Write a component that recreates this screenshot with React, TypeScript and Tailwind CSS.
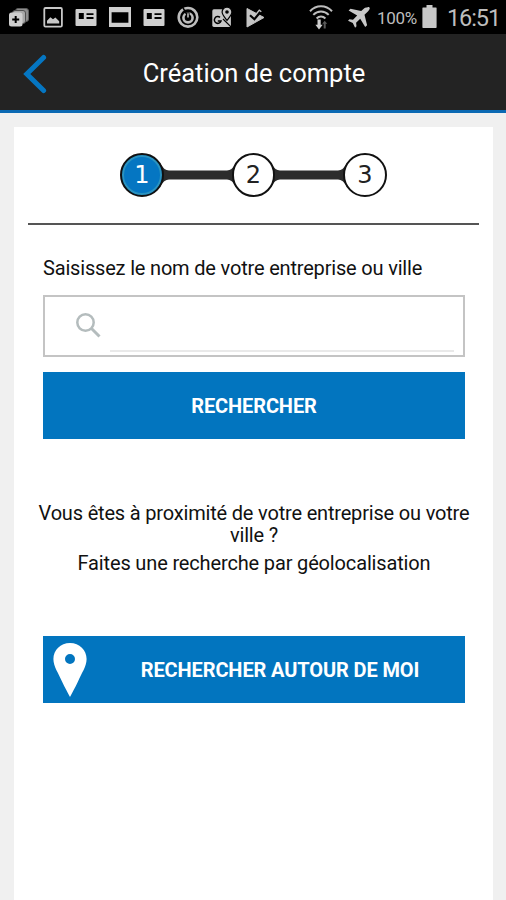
import { useState, type ReactNode } from "react";

interface StatusIconProps {
  children: ReactNode;
}

const StatusIcon = ({ children }: StatusIconProps) => {
  return (
    <span className="flex w-[33.8px] shrink-0 justify-center">
      <svg width="22" height="22" viewBox="0 0 22 22" fill="none">
        {children}
      </svg>
    </span>
  );
};

const ContactCardIcon = () => {
  return (
    <StatusIcon>
      <rect x="0.5" y="3" width="21" height="17" rx="1" fill="#cfcfcf" />
      <rect x="3.8" y="7" width="5" height="6" fill="#000" />
      <path d="M11.5 8.2h7M11.5 12h7" stroke="#000" strokeWidth="1.8" />
    </StatusIcon>
  );
};

const StatusBar = () => {
  return (
    <div className="flex h-[34px] items-center bg-black pl-[2px] text-[#bdbdbd]">
      <StatusIcon>
        <rect x="7.5" y="2.5" width="13" height="13" rx="2.5" fill="#8f8f8f" stroke="#5c5c5c" />
        <rect x="4.5" y="4.5" width="13" height="13" rx="2.5" fill="#a8a8a8" stroke="#505050" />
        <rect x="1" y="6.5" width="13.5" height="14" rx="2.5" fill="#cfcfcf" />
        <path d="M7.7 10v7M4.2 13.5h7" stroke="#000" strokeWidth="2" />
      </StatusIcon>

      <StatusIcon>
        <rect x="2.3" y="2" width="17.6" height="18.6" rx="1.2" stroke="#c8c8c8" strokeWidth="1.8" />
        <path d="M5 17.5v-2.8l3.4-3.5 2.6 2 2.4-1.6 3.8 3.6v2.3z" fill="#c8c8c8" />
      </StatusIcon>

      <ContactCardIcon />

      <StatusIcon>
        <path
          fillRule="evenodd"
          d="M0 1h22v20H0zM2.6 6.2h16.8v10.6H2.6z"
          fill="#cfcfcf"
        />
      </StatusIcon>

      <ContactCardIcon />

      <StatusIcon>
        <circle cx="11" cy="11.3" r="9.3" stroke="#bdbdbd" strokeWidth="2.6" />
        <circle cx="11" cy="11.8" r="4.6" stroke="#bdbdbd" strokeWidth="2.6" />
        <path d="M5.6 1.2 11 10.5" stroke="#000" strokeWidth="1.5" />
        <path d="M11 6.3v5" stroke="#000" strokeWidth="3.2" />
        <path d="M11 7.2v4.4" stroke="#bdbdbd" strokeWidth="1.6" />
      </StatusIcon>

      <StatusIcon>
        <rect x="1.3" y="3.3" width="18.6" height="17.6" rx="1.6" fill="#c8c8c8" />
        <path d="m12 13 8 7.900" stroke="#000" strokeWidth="1.2" />
        <path
          d="M9 11.4a3.400 3.400 0 1 0 1 3.600H6.800"
          stroke="#000"
          strokeWidth="1.5"
        />
        <path
          d="M16 14.5c-3-3.9-4.9-6-4.9-8.5a4.9 4.9 0 0 1 9.8 0c0 2.5-1.9 4.6-4.9 8.5z"
          fill="#c8c8c8"
          stroke="#000"
          strokeWidth="1.2"
        />
        <circle cx="16" cy="6" r="1.8" fill="#000" />
      </StatusIcon>

      <StatusIcon>
        <path d="M3 2.5 20 11.5 3 21z" fill="#c4c4c4" stroke="#c4c4c4" strokeLinejoin="round" />
        <path d="m6 9.200 4.400 4L16 6.500" stroke="#000" strokeWidth="2.200" />
        <path d="m12.500 7.600 2.800-3.400 2 1.600" stroke="#c4c4c4" strokeWidth="1.400" />
      </StatusIcon>

      <div className="ml-[36.6px] flex w-6 justify-center">
        <svg width="24" height="28" viewBox="0 0 24 28" fill="none">
          <g stroke="#bdbdbd" strokeWidth="2">
            <path d="M1 8.2C7.2 1.7 16.8 1.7 23 8.2" />
            <path d="M4.3 11.9c4.4-4.5 11-4.5 15.4 0" />
            <path d="M7.6 15.5c2.5-2.6 6.3-2.6 8.8 0" />
          </g>
          <path d="M8.500 16.500h3.2v5.2h2L10 26.5l-3.6-4.800h2.100z" fill="#cfcfcf" />
          <path d="M14.7 25.500v-4.7h-1.5l2.500-3.1 2.5 3.1h-1.5v4.700z" fill="#5a5a5a" />
        </svg>
      </div>

      <svg className="ml-[14px]" width="23" height="24" viewBox="0 0 23 24">
        <path
          d="M20.7 2.2c1.3-.6 2.5.5 1.9 1.9-.3.8-1 1.6-1.7 2.3l-3.4 3.3 2.6 10.6-1.9 1.8-5-8.4-4.1 4.1.4 3.5-1.4 1.4-2.3-4.7L1 15.7l1.5-1.4 3.5.4 4.2-4.2-8.6-4.9 1.9-1.9 10.7 2.4 3.4-3.1c.8-.6 1.9-.4 3.1-.8z"
          fill="#c8c8c8"
        />
      </svg>

      <span className="mt-[3px] ml-[7px] w-[40px] text-[17px] tracking-[-0.3px] whitespace-nowrap">
        100%
      </span>

      <svg className="ml-[5px]" width="15" height="24" viewBox="0 0 15 24">
        <path d="M4.5 0h6v2.5H14q.6 0 .6.6V22q0 1-.6 1H1q-.6 0-.6-1V3.1q0-.6.6-.6h3.5z" fill="#c8c8c8" />
      </svg>

      <span className="mt-[4px] ml-[10px] text-[23.5px] tracking-[-1.1px] whitespace-nowrap">
        16:51
      </span>
    </div>
  );
};

const Header = () => {
  return (
    <header className="flex h-[79px] items-center border-b-[3px] border-[#0b69b3] bg-[#232323] pt-[3px]">
      <button type="button" aria-label="Retour" className="w-[70px] pl-[22.5px]">
        <svg width="25" height="40" viewBox="0 0 25 40" fill="none">
          <path
            d="M20.600 3.500 3.800 20l16.800 16.500"
            stroke="#0576c2"
            strokeWidth="5"
            strokeLinecap="round"
          />
        </svg>
      </button>

      <h1 className="flex-1 pr-[68px] text-center text-[25.5px] text-white">
        Création de compte
      </h1>
    </header>
  );
};

const Connector = () => {
  return (
    <svg className="-mx-[4px] shrink-0" width="76" height="24" viewBox="0 0 76 24">
      <path
        d="M0 0Q4 7.6 9 7.6H67Q72 7.6 76 0V24Q72 16.6 67 16.6H9Q4 16.6 0 24z"
        fill="#2c2c2c"
      />
    </svg>
  );
};

interface StepProps {
  value: number;
  active?: boolean;
}

const Step = ({ value, active = false }: StepProps) => {
  return (
    <li
      className={`z-10 flex size-[43.5px] shrink-0 items-center justify-center rounded-full border-2 border-[#111] font-['DejaVu_Sans',sans-serif] text-[24px] ${
        active
          ? "bg-[#0576c2] text-white shadow-[inset_0_0_0_2px_#2b93bf]"
          : "bg-white text-[#222]"
      }`}
    >
      {value}
    </li>
  );
};

const App = () => {
  const [query, setQuery] = useState("");

  return (
    <div className="flex h-[900px] w-[506px] flex-col overflow-hidden bg-[#f0f0f0] font-[Roboto,sans-serif]">
      <StatusBar />
      <Header />

      <main className="mt-[14px] mr-[13px] ml-[14px] flex flex-1 flex-col bg-white px-[14px] pt-[26px]">
        <ol className="flex items-center justify-center">
          <Step value={1} active />
          <Connector />
          <Step value={2} />
          <Connector />
          <Step value={3} />
        </ol>

        <hr className="mt-[26.5px] border-t-2 border-[#555]" />

        <div className="flex flex-col pr-[14px] pl-[15px] text-[20px] leading-[22px] tracking-[-0.18px] text-[#111]">
          <label htmlFor="company" className="mt-[32px] whitespace-nowrap">
            Saisissez le nom de votre entreprise ou ville
          </label>

          <div className="mt-[16px] flex h-[62px] border-2 border-[#c4c4c4] pr-[9px] pl-[29px]">
            <svg className="mt-[14px] shrink-0" width="28" height="28" viewBox="0 0 28 28" fill="none">
              <circle cx="11.5" cy="11.5" r="8.2" stroke="#b4bcbd" strokeWidth="2.5" />
              <path d="m17.5 17.5 8 8" stroke="#b4bcbd" strokeWidth="3" />
            </svg>
            <input
              id="company"
              value={query}
              onChange={(event) => setQuery(event.target.value)}
              className="mb-[3px] ml-[8px] min-w-0 flex-1 border-b-2 border-[#e9e9e9] outline-none"
            />
          </div>

          <button
            type="button"
            className="mt-[15px] h-[67px] bg-[#0275bf] pt-px font-bold tracking-[-0.12px] text-white"
          >
            RECHERCHER
          </button>

          <p className="-mx-[12px] mt-[63px] text-center">
            Vous êtes à proximité de votre entreprise ou votre ville ?
          </p>
          <p className="mt-[6px] text-center tracking-[-0.15px] whitespace-nowrap">
            Faites une recherche par géolocalisation
          </p>

          <button
            type="button"
            className="mt-[62px] flex h-[67px] items-center bg-[#0275bf] pl-[10px] font-bold tracking-[-0.12px] text-white"
          >
            <svg className="shrink-0" width="34" height="54" viewBox="0 0 34 54">
              <path
                fillRule="evenodd"
                d="M17 0C7.500 0 .4 7 .4 16c0 7.500 5 14 8.600 22.500C12 45 14.500 49 17 54c2.500-5 5-9 8-15.500C28.600 30 33.600 23.500 33.600 16 33.600 7 26.500 0 17 0zm0 11a5 5 0 1 1 0 10 5 5 0 0 1 0-10z"
                fill="#fff"
              />
            </svg>
            <span className="flex-1 pt-px pr-[9px] pl-[17px] text-center">
              RECHERCHER AUTOUR DE MOI
            </span>
          </button>
        </div>
      </main>
    </div>
  );
};

export default App;
